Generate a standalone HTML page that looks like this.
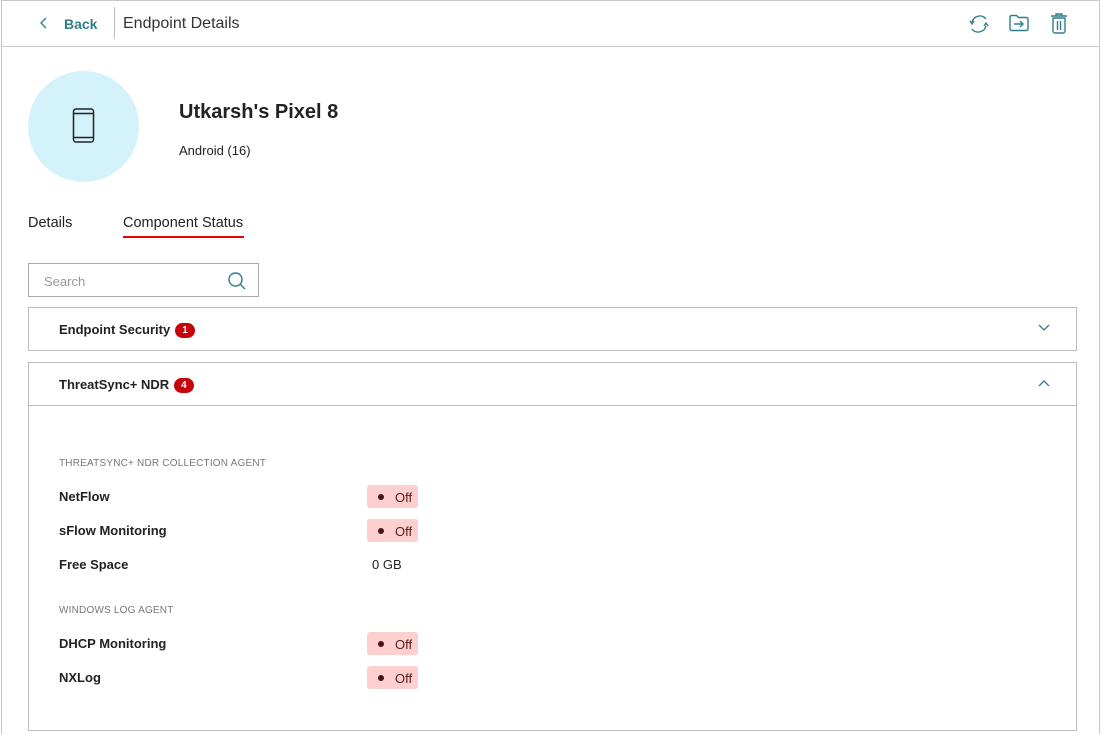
<!DOCTYPE html>
<html><head><meta charset="utf-8"><style>
*{margin:0;padding:0;box-sizing:border-box}
html,body{width:1102px;height:734px;overflow:hidden}
body{background:#fff;font-family:"Liberation Sans",sans-serif;color:#222;position:relative}
.a{position:absolute;white-space:nowrap}
.frame{position:absolute;left:1px;top:0;width:1099px;height:734px;border:1px solid #c8c8c8;border-bottom:none}
.hdr{position:absolute;left:1px;top:46px;width:1099px;height:1px;background:#c8c8c8}
.box{position:absolute;border:1px solid #bdbdbd;background:#fff}
.badge{display:inline-block;background:#c8000a;color:#fff;font-size:10px;font-weight:bold;border-radius:8px;height:15px;line-height:15px;padding:0 7px;margin-left:5px;vertical-align:1px}
.lbl{font-size:13px;font-weight:bold;color:#222}
.off{position:absolute;left:367px;width:51px;height:23px;background:#fdcfcf;border-radius:3px;font-size:13px;color:#5a1a1a;line-height:23px}
.off::before{content:"";position:absolute;left:11px;top:9px;width:6px;height:6px;border-radius:50%;background:#4a1414}
.off span{position:absolute;left:28px;top:1px}
.sec{font-size:10px;color:#777;letter-spacing:.2px}
</style></head><body>
<div class="frame"></div>
<div class="hdr"></div>
<svg class="a" style="left:39px;top:17px" width="10" height="12" viewBox="0 0 10 12"><path d="M7 1L2 6l5 5" fill="none" stroke="#2f7f8a" stroke-width="1.3"/></svg>
<div class="a" style="left:64px;top:16px;font-size:14px;font-weight:bold;color:#2f7f8a">Back</div>
<div class="a" style="left:114px;top:7px;width:1px;height:32px;background:#bbb"></div>
<div class="a" style="left:123px;top:15px;font-size:16px;color:#333">Endpoint Details</div>
<svg class="a" style="left:967px;top:12px" width="24" height="24" viewBox="0 0 24 24" fill="none" stroke="#2f7f8a" stroke-width="1.4"><path d="M5 10a8 8 0 0 1 14-3"/><path d="M19 14a8 8 0 0 1-14 3"/><path d="M3 9l2 3 2-3"/><path d="M17 14l2-3 2 3"/></svg>
<svg class="a" style="left:1008px;top:13px" width="22" height="20" viewBox="0 0 22 20" fill="none" stroke="#2f7f8a" stroke-width="1.4"><path d="M2 4a1.5 1.5 0 0 1 1.5-1.5h5l2 2h8a1.5 1.5 0 0 1 1.5 1.5v10a1.5 1.5 0 0 1-1.5 1.5h-15A1.5 1.5 0 0 1 2 16z"/><path d="M6 11h9M12 8l3 3-3 3"/></svg>
<svg class="a" style="left:1049px;top:11px" width="20" height="24" viewBox="0 0 20 24" fill="none" stroke="#2f7f8a" stroke-width="1.4"><path d="M2 5h16M7 5V3h6v2"/><path d="M4 7v13a2 2 0 0 0 2 2h8a2 2 0 0 0 2-2V7z"/><path d="M8.5 10v9M11.5 10v9"/></svg>
<div class="a" style="left:28px;top:71px;width:111px;height:111px;border-radius:50%;background:#d3f2f9"></div>
<svg class="a" style="left:72px;top:108px" width="23" height="36" viewBox="0 0 23 36" fill="none" stroke="#222" stroke-width="1.5"><rect x="1.5" y="1" width="20" height="33" rx="2.5"/><path d="M1.5 5.5h20M1.5 29.5h20"/></svg>
<div class="a" style="left:179px;top:101px;font-size:20px;font-weight:bold;color:#222">Utkarsh's Pixel 8</div>
<div class="a" style="left:179px;top:143px;font-size:13px;color:#222">Android (16)</div>
<div class="a" style="left:28px;top:215px;font-size:14.5px;color:#222">Details</div>
<div class="a" style="left:123px;top:215px;font-size:14.5px;color:#222">Component Status</div>
<div class="a" style="left:123px;top:236px;width:121px;height:2px;background:#e00"></div>
<div class="box" style="left:28px;top:263px;width:231px;height:34px;border-color:#aaa"></div>
<div class="a" style="left:44px;top:274px;font-size:13px;color:#999">Search</div>
<svg class="a" style="left:227px;top:271px" width="20" height="20" viewBox="0 0 20 20" fill="none" stroke="#2f7f8a" stroke-width="1.4"><circle cx="8.5" cy="8.5" r="6.5"/><path d="M13 13l5 5"/></svg>
<div class="box" style="left:28px;top:307px;width:1049px;height:44px"></div>
<div class="a lbl" style="left:59px;top:322px">Endpoint Security<span class="badge">1</span></div>
<svg class="a" style="left:1038px;top:324px" width="12" height="8" viewBox="0 0 12 8"><path d="M1 1l5 5 5-5" fill="none" stroke="#2f7f8a" stroke-width="1.3"/></svg>
<div class="box" style="left:28px;top:362px;width:1049px;height:369px"></div>
<div class="a" style="left:29px;top:405px;width:1047px;height:1px;background:#bdbdbd"></div>
<div class="a lbl" style="left:59px;top:377px">ThreatSync+ NDR<span class="badge">4</span></div>
<svg class="a" style="left:1038px;top:379px" width="12" height="8" viewBox="0 0 12 8"><path d="M1 7l5-5 5 5" fill="none" stroke="#2f7f8a" stroke-width="1.3"/></svg>
<div class="a sec" style="left:59px;top:458px">THREATSYNC+ NDR COLLECTION AGENT</div>
<div class="a lbl" style="left:59px;top:489px">NetFlow</div>
<div class="off" style="top:485px"><span>Off</span></div>
<div class="a lbl" style="left:59px;top:523px">sFlow Monitoring</div>
<div class="off" style="top:519px"><span>Off</span></div>
<div class="a lbl" style="left:59px;top:557px">Free Space</div>
<div class="a" style="left:372px;top:557px;font-size:13px;color:#222">0 GB</div>
<div class="a sec" style="left:59px;top:605px">WINDOWS LOG AGENT</div>
<div class="a lbl" style="left:59px;top:636px">DHCP Monitoring</div>
<div class="off" style="top:632px"><span>Off</span></div>
<div class="a lbl" style="left:59px;top:670px">NXLog</div>
<div class="off" style="top:666px"><span>Off</span></div>
</body></html>
